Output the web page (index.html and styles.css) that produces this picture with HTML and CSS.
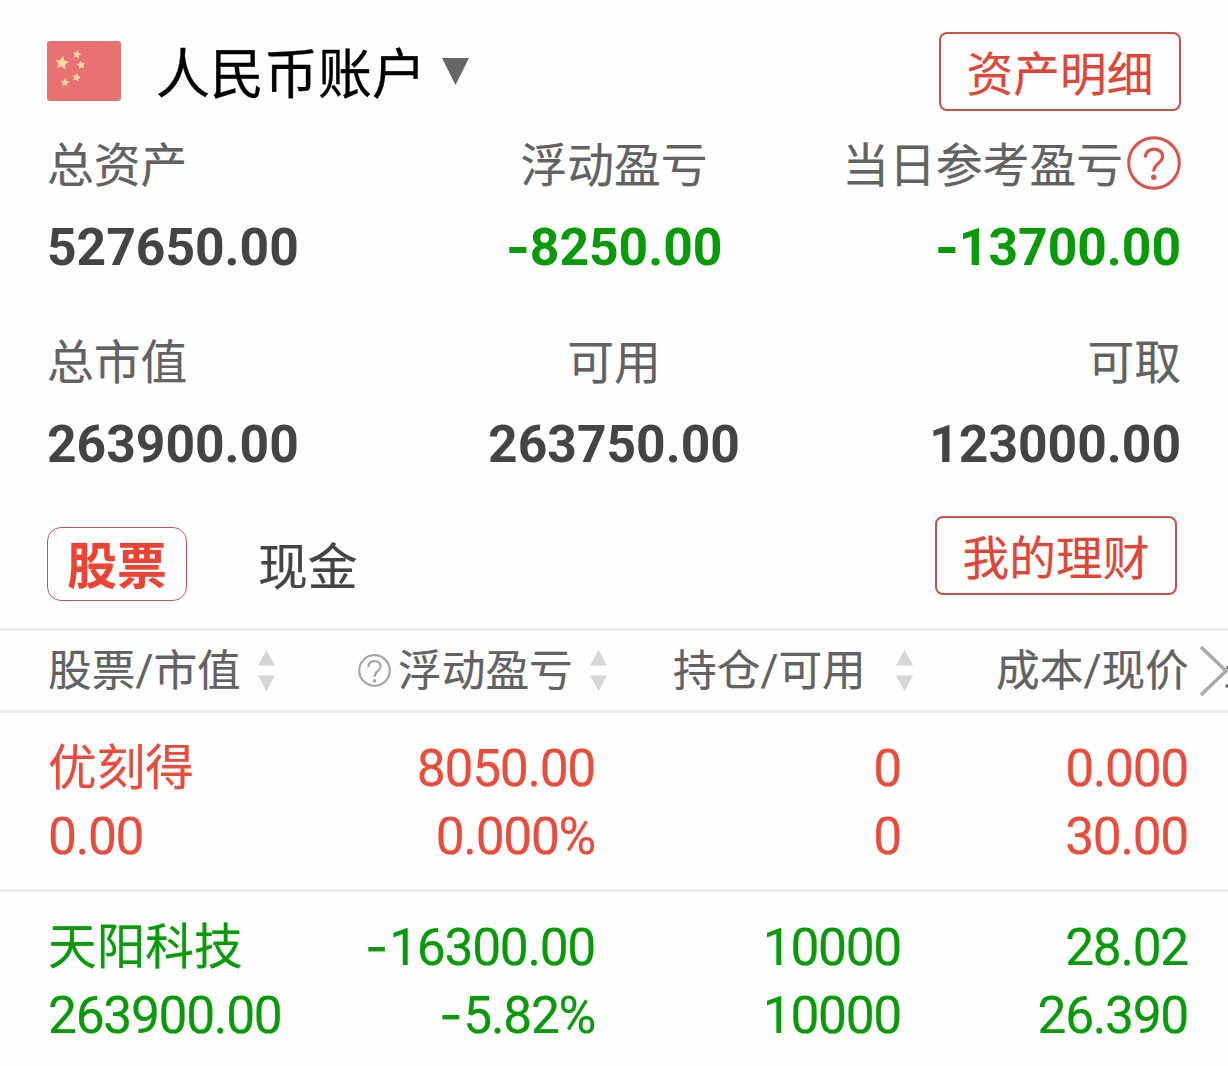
FILE: index.html
```html
<!DOCTYPE html>
<html lang="zh-CN">
<head>
  <meta charset="UTF-8" />
  <meta name="viewport" content="width=device-width, initial-scale=1.0" />
  <title>人民币账户</title>
  <link rel="stylesheet" href="styles.css">
</head>
<body>
  <header class="account">
    <svg class="flag" viewBox="0 0 74 60">
      <defs>
        <path id="star" d="M0,-1 L.3,-.4 L.95,-.31 L.48,.16 L.59,.81 L0,.51 L-.59,.81 L-.48,.16 L-.95,-.31 L-.3,-.4 Z" />
      </defs>
      <rect width="74" height="60" rx="3" fill="#e87272" />
      <g fill="#fcd9a4">
        <use href="#star" transform="translate(15 22) rotate(8) scale(7)" />
        <use href="#star" transform="translate(30 13.5) rotate(10) scale(4.4)" />
        <use href="#star" transform="translate(34 24) rotate(-12) scale(4.4)" />
        <use href="#star" transform="translate(29.5 36.5) rotate(14) scale(4.4)" />
        <use href="#star" transform="translate(18 41.5) rotate(5) scale(4.4)" />
      </g>
    </svg>
    <h1>人民币账户</h1>
    <svg class="caret" viewBox="0 0 27 27"><path d="M0 0H27L13.5 27Z" fill="#666" /></svg>
    <button class="button">资产明细</button>
  </header>

  <section class="stats">
    <div class="stat"><p class="label">总资产</p><p class="value">527650.00</p></div>
    <div class="stat center"><p class="label">浮动盈亏</p><p class="value green"><span class="minus">-</span>8250.00</p></div>
    <div class="stat right">
      <p class="label">当日参考盈亏<svg class="help" viewBox="0 0 54 54" fill="none" stroke="#dc5148">
        <circle cx="27" cy="27" r="25.3" stroke-width="3" />
        <path d="M18.5 21.5C18.5 16 22 13.2 27 13.2S35.7 16.3 35.7 20.5C35.7 27 26.7 27.5 26.7 35.5" stroke-width="3.2" />
        <circle cx="26.7" cy="41.3" r="2.7" fill="#dc5148" stroke="none" />
      </svg></p>
      <p class="value green"><span class="minus">-</span>13700.00</p>
    </div>
    <div class="stat"><p class="label">总市值</p><p class="value">263900.00</p></div>
    <div class="stat center"><p class="label">可用</p><p class="value">263750.00</p></div>
    <div class="stat right"><p class="label">可取</p><p class="value">123000.00</p></div>
  </section>

  <nav class="tabs">
    <a class="tab active">股票</a>
    <a class="tab">现金</a>
    <button class="button">我的理财</button>
  </nav>

  <div class="thead">
    <div class="th">股票/市值<svg class="sort" viewBox="0 0 17 41"><path d="M8.5 0L17 15.5H0ZM0 25.5H17L8.5 41Z" /></svg></div>
    <div class="th"><svg class="help-small" viewBox="0 0 54 54" fill="none" stroke="#a6a6a6">
        <circle cx="27" cy="27" r="25" stroke-width="3.6" />
        <path d="M17 21.5C17 15 21 11.5 27 11.5S37 15 37 20.5C37 28 27 28 27 37" stroke-width="3.6" />
        <circle cx="27" cy="44" r="3" fill="#a6a6a6" stroke="none" />
      </svg>浮动盈亏<svg class="sort" viewBox="0 0 17 41"><path d="M8.5 0L17 15.5H0ZM0 25.5H17L8.5 41Z" /></svg></div>
    <div class="th wide">持仓/可用<svg class="sort" viewBox="0 0 17 41"><path d="M8.5 0L17 15.5H0ZM0 25.5H17L8.5 41Z" /></svg></div>
    <div class="th">成本/现价</div>
    <!-- arrow over the cut-off edge of the next column -->
    <svg class="more" viewBox="0 0 29 50" fill="none" stroke-width="3.5"><path d="M2 1L27 25L2 49" stroke="#aaa" /><path d="M27.5 21.5H29M26.5 40H29" stroke="#626262" stroke-width="3" /></svg>
  </div>

  <div class="row red">
    <div class="cell"><p class="name">优刻得</p><p>0.00</p></div>
    <div class="cell"><p>8050.00</p><p>0.000%</p></div>
    <div class="cell"><p>0</p><p>0</p></div>
    <div class="cell"><p>0.000</p><p>30.00</p></div>
  </div>
  <div class="row green">
    <div class="cell"><p class="name">天阳科技</p><p>263900.00</p></div>
    <div class="cell"><p><span class="minus">-</span>16300.00</p><p><span class="minus">-</span>5.82%</p></div>
    <div class="cell"><p>10000</p><p>10000</p></div>
    <div class="cell"><p>28.02</p><p>26.390</p></div>
  </div>
</body>
</html>
```

FILE: styles.css
```css
* {
  box-sizing: border-box;
}

body {
  margin: 0;
  background-color: #fefefe;
  font-family: Roboto, "Noto Sans CJK SC", sans-serif;
  color: #444;
  overflow: hidden;
}

h1, p {
  margin: 0;
}

svg {
  display: block;
  flex-shrink: 0;
}

.account {
  display: flex;
  align-items: flex-start;
  height: 134px;
  padding: 32px 47px 0;
}

.flag {
  width: 74px;
  height: 60px;
  margin: 9px 35px 0 0;
}

h1 {
  padding-top: 4px;
  font-size: 54px;
  font-weight: 400;
  line-height: 80px;
  color: #000;
  -webkit-text-stroke: 0.3px;
}

.caret {
  width: 27px;
  height: 27px;
  margin: 26px 0 0 16px;
}

.button {
  width: 242px;
  height: 79px;
  margin-left: auto;
  padding: 7px 0 0;
  border: 2px solid #cb5048;
  border-radius: 8px;
  background: none;
  font-family: inherit;
  font-size: 46.7px;
  line-height: 68px;
  color: #e04638;
  -webkit-text-stroke: 0.2px;
}

.stats {
  display: grid;
  grid-template-columns: 1fr 1fr 1fr;
  grid-auto-rows: 197px;
  padding: 0 47px;
}

.label {
  display: flex;
  font-size: 46.8px;
  line-height: 64px;
  height: 60px;
  color: #626262;
  white-space: nowrap;
  -webkit-text-stroke: 0.2px;
}

.value {
  margin-top: 24px;
  font-size: 51.6px;
  font-weight: 700;
  line-height: 60px;
}

.center .label {
  justify-content: center;
}

.center {
  text-align: center;
}

.right .label {
  justify-content: flex-end;
}

.right {
  text-align: right;
}

.help {
  width: 54px;
  height: 54px;
  margin: 2px 0 0 4px;
}

.minus {
  font-family: Inter, sans-serif;
  line-height: 0;
}

.red {
  color: #e94b3d;
}

.green {
  color: #089a08;
}

.tabs {
  display: flex;
  align-items: flex-start;
  height: 112px;
  padding: 0 51px 0 47px;
  margin-top: -12px;
}

.tab {
  margin: 11px 0 0 71px;
  font-size: 49.8px;
  line-height: 82px;
  -webkit-text-stroke: 0.2px;
}

.tab.active {
  width: 140px;
  height: 74px;
  margin-left: 0;
  border: 1px solid #c4564e;
  border-radius: 14px;
  line-height: 79px;
  font-weight: 700;
  text-align: center;
  color: #ee4233;
}

.thead {
  display: grid;
  grid-template-columns: 310px 315px 323px 203px 29px;
  align-items: center;
  height: 85px;
  padding-left: 48px;
  border-top: 3px solid #ececec;
  border-bottom: 3px solid #ececec;
  font-size: 43.7px;
  color: #626262;
  -webkit-text-stroke: 0.2px;
}

.th {
  display: flex;
  align-items: center;
  height: 64px;
  line-height: 68px;
  white-space: nowrap;
}

.sort {
  width: 17px;
  height: 41px;
  margin-left: 17px;
  fill: #d6d6d6;
  stroke: none;
}

.wide .sort {
  margin-left: 30px;
}

.help-small {
  width: 33px;
  height: 33px;
  margin-right: 7px;
}

.more {
  width: 29px;
  height: 50px;
}

.row {
  display: grid;
  grid-template-columns: 262px 285px 306px 287px;
  height: 179px;
  padding: 22px 0 0 48px;
  border-bottom: 3px solid #ececec;
  font-size: 51.5px;
  line-height: 68px;
  letter-spacing: -1.3px;
  -webkit-text-stroke: 0.2px;
}

.row:last-child {
  border-bottom: none;
}

.row .minus {
  margin-right: 2px;
}

.cell {
  text-align: right;
  white-space: nowrap;
}

.cell:first-child {
  text-align: left;
}

.name {
  font-size: 48.7px;
  letter-spacing: 0;
}
```
